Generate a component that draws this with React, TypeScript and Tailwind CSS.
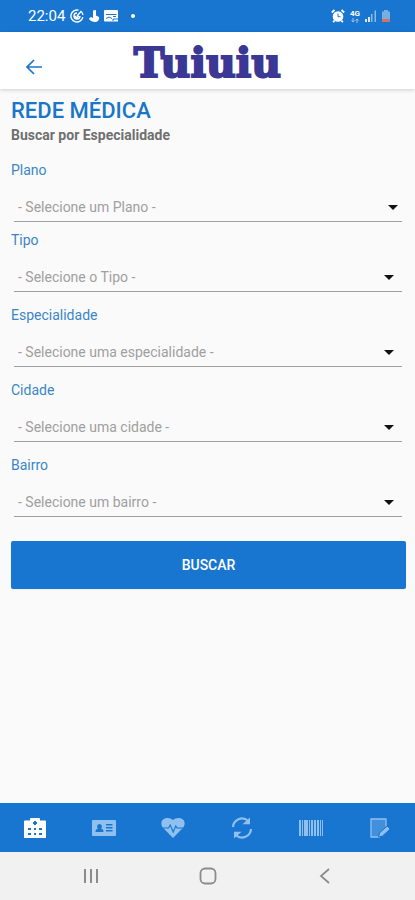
import type { ReactNode } from "react";
import clsx from "clsx";

const fields = [
  { id: "plano", label: "Plano", placeholder: "- Selecione um Plano -" },
  { id: "tipo", label: "Tipo", placeholder: "- Selecione o Tipo -" },
  {
    id: "especialidade",
    label: "Especialidade",
    placeholder: "- Selecione uma especialidade -",
  },
  { id: "cidade", label: "Cidade", placeholder: "- Selecione uma cidade -" },
  { id: "bairro", label: "Bairro", placeholder: "- Selecione um bairro -" },
];

const tabs: { label: string; icon: ReactNode }[] = [
  {
    label: "Rede médica",
    icon: (
      <path
        fillRule="evenodd"
        d="M7 4.500V3a1 1 0 0 1 1-1h8a1 1 0 0 1 1 1v1.500h5a1 1 0 0 1 1 1V22H1V5.500a1 1 0 0 1 1-1zM11 5v1H10v2h1v1h2V8h1V6h-1V5zM5 12v2h3v-2zm6 0v2h2v-2zm5 0v2h3v-2zM5 17v2h3v-2zm6 0v2h2v-2zm5 0v2h3v-2z"
      />
    ),
  },
  {
    label: "Carteirinha",
    icon: (
      <path
        fillRule="evenodd"
        d="M1 4h22a1 1 0 0 1 1 1v14a1 1 0 0 1-1 1H1a1 1 0 0 1-1-1V5a1 1 0 0 1 1-1zm6.500 4a2.500 2.500 0 0 0-1.500 4.500c-1.500.3-2.500 1.400-2.500 3.500h8c0-2.100-1-3.200-2.500-3.500A2.500 2.500 0 0 0 7.500 8zM14 8v1.500h6.500V8zm0 3v1.500h6.500V11zm0 3v1.500h6.500V14z"
      />
    ),
  },
  {
    label: "Saúde",
    icon: (
      <>
        <path d="M12 22 2.200 12C-.3 9.300-.2 5.200 2.400 3.300 5.200 1.200 9.600 1.800 12 4c2.400-2.200 6.800-2.800 9.600-.7 2.600 1.900 2.700 6 .2 8.700z" />
        <path
          d="M0 12h7.500l1.700-3 3 7 2.600-6 1.200 2h8"
          fill="none"
          stroke="#1976d0"
          strokeWidth="1.100"
        />
      </>
    ),
  },
  {
    label: "Atualizar",
    icon: (
      <>
        <path
          d="M3 11a9 9 0 0 1 15-6.200M21 13a9 9 0 0 1-15 6.200"
          fill="none"
          stroke="currentColor"
          strokeWidth="2.200"
        />
        <path d="M20 1.500v6.800h-7.500zM4 22.500v-6.800h7.500z" />
      </>
    ),
  },
  {
    label: "Código de barras",
    icon: (
      <path d="M0 4h2v16H0zm3 0h1v16H3zm2 0h4v16H5zm5 0h1v16h-1zm2 0h2v16h-2zm3 0h2v16h-2zm3 0h2v16h-2zm3 0h1v16h-1zm2 0h1v16h-1z" />
    ),
  },
  {
    label: "Solicitações",
    icon: (
      <>
        <path
          d="M12 21H3V3h15v7.500M18 16v1"
          fill="currentColor"
          fillOpacity="0.35"
          stroke="currentColor"
          strokeWidth="1.300"
        />
        <path
          d="m10.500 21 1-4 7.700-7 3 3-7.700 7z"
          stroke="#1976d0"
          strokeWidth="1"
        />
      </>
    ),
  },
];

function StatusBar() {
  return (
    <div className="flex h-8 items-center justify-between bg-[#1976d0] pr-6 pl-7 text-white">
      <div className="flex items-center gap-1">
        <span className="mr-px text-[15px] leading-5">22:04</span>
        <svg viewBox="0 0 14 14" className="h-3.5 w-3.5" fill="none" stroke="currentColor" strokeWidth="1.400">
          <path d="M8.500 1.200A6 6 0 1 0 12.800 8M10.500 2a6 6 0 0 1 2.500 4" />
          <path d="M7 4a3 3 0 1 0 3 3M7 7l4-4.500M5 7l1.800 1.800L9 7" />
        </svg>
        <svg viewBox="0 0 12 14" className="h-3.5 w-3" fill="currentColor">
          <path d="M5 1.500 8 1v5.500l3 1.500c.6 2.700-1.200 5-3.800 5C4.500 13 1.500 11.800 1 9.500L3 8l2 1z" />
        </svg>
        <svg viewBox="0 0 15 14" className="h-3.5 w-[15px]">
          <path
            d="M1 1h12a1 1 0 0 1 1 1v10.500H1a1 1 0 0 1-1-1V2a1 1 0 0 1 1-1z"
            fill="currentColor"
          />
          <path
            d="M2 5.500h10.500M2 9.500 5 8l3 1.500M9 7.500h3M9 12v-2h5"
            fill="none"
            stroke="#1976d0"
          />
        </svg>
        <span className="ml-2 h-1 w-1 rounded-full bg-white" />
      </div>
      <div className="flex items-center gap-1">
        <svg viewBox="0 0 14 14" className="h-3.5 w-3.5">
          <circle cx="7" cy="7.500" r="5.300" fill="currentColor" />
          <path
            d="M.8 3.500 3.500 1M13.200 3.500 10.500 1M3.500 11.500l-1.300 1.700M10.500 11.500l1.300 1.700"
            stroke="currentColor"
            strokeWidth="1.800"
          />
          <path d="M7 4.500v3.200h2.500" fill="none" stroke="#1976d0" />
        </svg>
        <div className="flex w-3 flex-col items-center">
          <span className="text-[8px] leading-2 font-bold">4G</span>
          <svg viewBox="0 0 8 5" className="h-[5px] w-2 opacity-60" fill="none" stroke="currentColor">
            <path d="M2 0v4M.5 2.500 2 4l1.500-1.500M6 5V1M4.500 2.500 6 1l1.500 1.500" />
          </svg>
        </div>
        <svg viewBox="0 0 12 14" className="h-3.5 w-3" fill="currentColor">
          <path d="M0 13v-3h2v3zm3 0V8h2v5z" opacity=".85" />
          <path d="M6 13V5h1.500v8zm3.500 0V1.500H11V13z" opacity=".5" />
        </svg>
        <svg viewBox="0 0 10 14" className="h-3.5 w-2.5">
          <path d="M3 1h4v1.500h2V13H1V2.500h2z" fill="#78aee3" />
          <path d="M1 10h8v3H1z" fill="#d9705c" />
        </svg>
      </div>
    </div>
  );
}

function Header() {
  return (
    <header className="relative flex h-[57px] items-center justify-center bg-white shadow-[0_1px_4px_rgba(0,0,0,0.18)]">
      <button
        type="button"
        aria-label="Voltar"
        className="absolute top-0 left-0 flex h-full w-[68px] items-center justify-center pt-3 text-[#1976d0]"
      >
        <svg viewBox="0 0 16 16" className="h-4 w-4" fill="none" stroke="currentColor" strokeWidth="1.700">
          <path d="M16 8H1.500M8 1 1 8l7 7" />
        </svg>
      </button>
      <h1 className="pt-1.5 font-['DejaVu_Serif',serif] text-[41px] leading-none font-bold text-[#3b3795] [-webkit-text-stroke:2px_#3b3795]">
        Tuiuiu
      </h1>
    </header>
  );
}

export default function App() {
  return (
    <div className="flex min-h-screen flex-col bg-[#fafafa] font-[Roboto,sans-serif]">
      <StatusBar />
      <Header />

      <main className="flex-1 px-[11px] pt-2">
        <h2 className="text-[22px] leading-7 font-medium text-[#1976c8]">
          REDE MÉDICA
        </h2>
        <p className="text-sm leading-5 font-bold text-[#707070]">
          Buscar por Especialidade
        </p>

        <form className="mt-[15px] -mr-0.5" onSubmit={(e) => e.preventDefault()}>
          {fields.map((field, i) => (
            <div
              key={field.id}
              className={clsx(i === 1 && "mt-2", i > 1 && "mt-[13px]")}
            >
              <label
                htmlFor={field.id}
                className="block text-sm leading-5 text-[#3b86c6]"
              >
                {field.label}
              </label>
              <div className="relative mt-3 mr-1 ml-[3px]">
                <select
                  id={field.id}
                  className="block h-[30px] w-full appearance-none border-b border-[#a0a0a0] bg-transparent pl-1 text-sm text-[#a0a0a0] outline-none"
                >
                  <option>{field.placeholder}</option>
                </select>
                <svg
                  viewBox="0 0 10 5"
                  className={clsx(
                    "pointer-events-none absolute top-[13px] h-[5px] w-2.5",
                    i === 0 ? "right-1" : "right-2"
                  )}
                >
                  <path d="M0 0h10L5 5z" fill="#111" />
                </svg>
              </div>
            </div>
          ))}

          <button
            type="submit"
            className="mt-6 h-12 w-full rounded-xs bg-[#1976d0] text-sm font-medium text-white shadow-xs"
          >
            BUSCAR
          </button>
        </form>
      </main>

      <nav className="grid h-[49px] grid-cols-6 bg-[#1976d0]">
        {tabs.map((tab, i) => (
          <a
            key={tab.label}
            href="#"
            aria-label={tab.label}
            className={clsx(
              "flex items-center justify-center",
              i === 0 ? "text-white" : "text-[#8fc0f0]"
            )}
          >
            <svg viewBox="0 0 24 24" className="h-6 w-6" fill="currentColor">
              {tab.icon}
            </svg>
          </a>
        ))}
      </nav>

      <div className="grid h-12 grid-cols-3 bg-[#f1f1f1] px-8 text-[#8c8c8c]">
        <button type="button" aria-label="Recentes" className="flex items-center justify-center">
          <svg viewBox="0 0 16 16" className="h-4 w-4" stroke="currentColor" strokeWidth="2">
            <path d="M2 1v14M8 1v14M14 1v14" />
          </svg>
        </button>
        <button type="button" aria-label="Início" className="flex items-center justify-center">
          <svg viewBox="0 0 18 18" className="h-[18px] w-[18px]" fill="none" stroke="currentColor" strokeWidth="1.800">
            <rect x="1.500" y="1.500" width="15" height="15" rx="4.500" />
          </svg>
        </button>
        <button type="button" aria-label="Voltar" className="flex items-center justify-center">
          <svg viewBox="0 0 16 16" className="h-4 w-4" fill="none" stroke="currentColor" strokeWidth="1.800">
            <path d="m12 1-8 7 8 7" />
          </svg>
        </button>
      </div>
    </div>
  );
}
